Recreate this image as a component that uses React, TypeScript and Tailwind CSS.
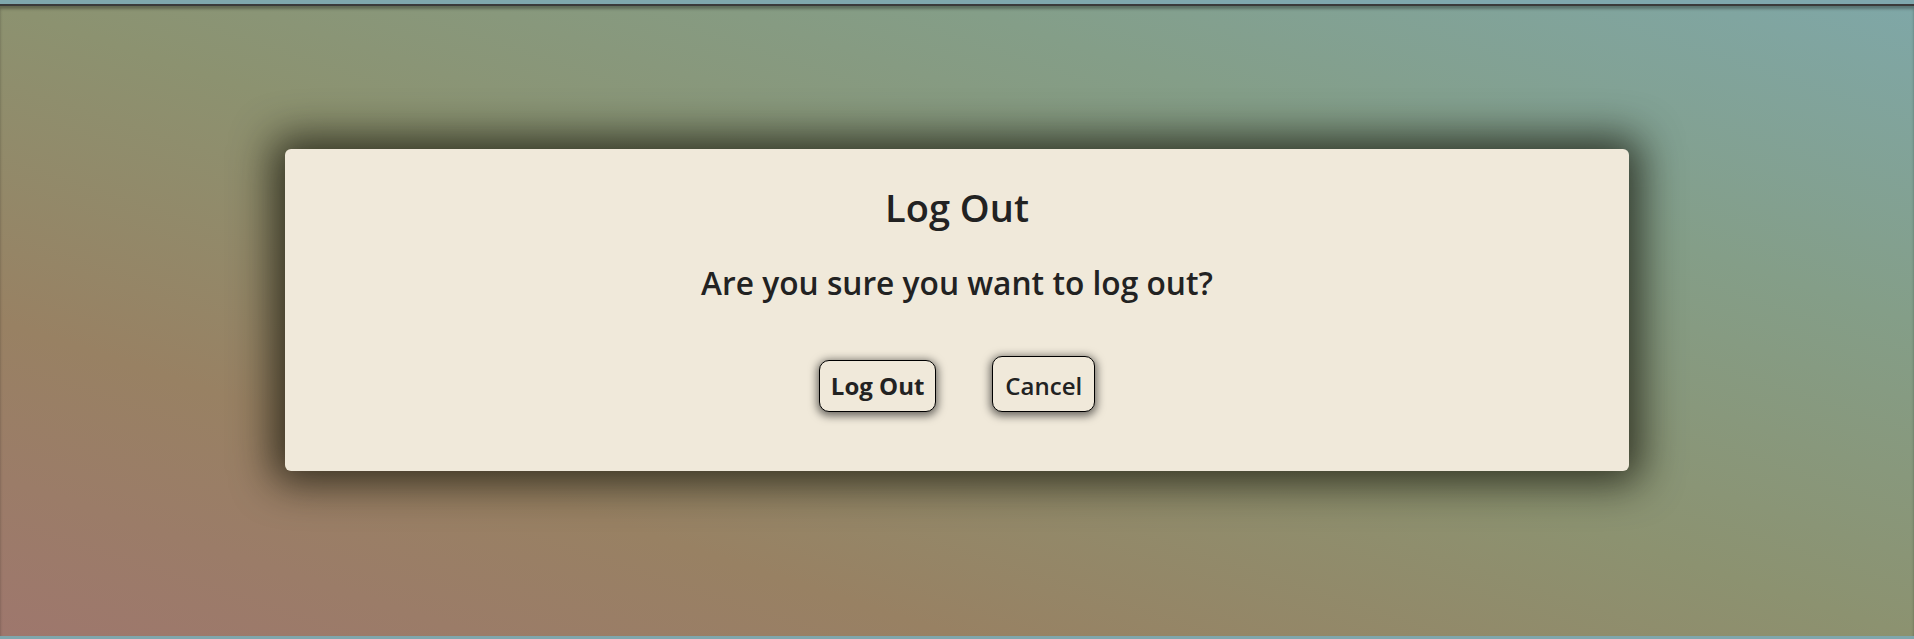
import React from 'react';

const LogoutModal: React.FC = () => {
    return (
        <div className="w-[1344px] h-[322px] rounded-md bg-[#f0e9da] shadow-[0_0_40px_12px_rgba(20,20,10,0.75)] flex flex-col items-center text-[#222222]">
            <h2 className="mt-[34px] text-[38px] leading-[48px] font-semibold">Log Out</h2>
            <p className="mt-[32px] text-[31.7px] leading-[40px] font-semibold">Are you sure you want to log out?</p>
            <div className="mt-[53px] flex items-end gap-[56px]">
                <button className="h-[52px] px-[11px] rounded-[10px] border border-black bg-[#f0e9da] shadow-[0_2px_8px_2px_rgba(0,0,0,0.55)] text-[24px] leading-[30px] font-bold">
                    Log Out
                </button>
                <button className="h-[56px] px-[12px] pt-[4px] rounded-[10px] border border-black bg-[#f0e9da] shadow-[0_2px_8px_2px_rgba(0,0,0,0.55)] text-[24px] leading-[30px] font-semibold">
                    Cancel
                </button>
            </div>
        </div>
    );
};

export default function App() {
    return (
        <div className="h-[639px] w-full bg-[#7fa7ad] flex flex-col overflow-hidden" style={{ fontFamily: '"Open Sans", "Noto Sans", sans-serif' }}>
            <div className="h-[4px]" />
            <div className="flex-1 border-t-[2px] border-[#3a3a3a] bg-[linear-gradient(to_top_right,#9e776d_0%,#988163_25%,#8c9270_50%,#849e88_75%,#7fa7a7_100%)] shadow-[inset_0_3px_3px_rgba(0,0,0,0.3)] flex justify-center pt-[143px]">
                <LogoutModal />
            </div>
            <div className="h-[3px]" />
        </div>
    );
}
